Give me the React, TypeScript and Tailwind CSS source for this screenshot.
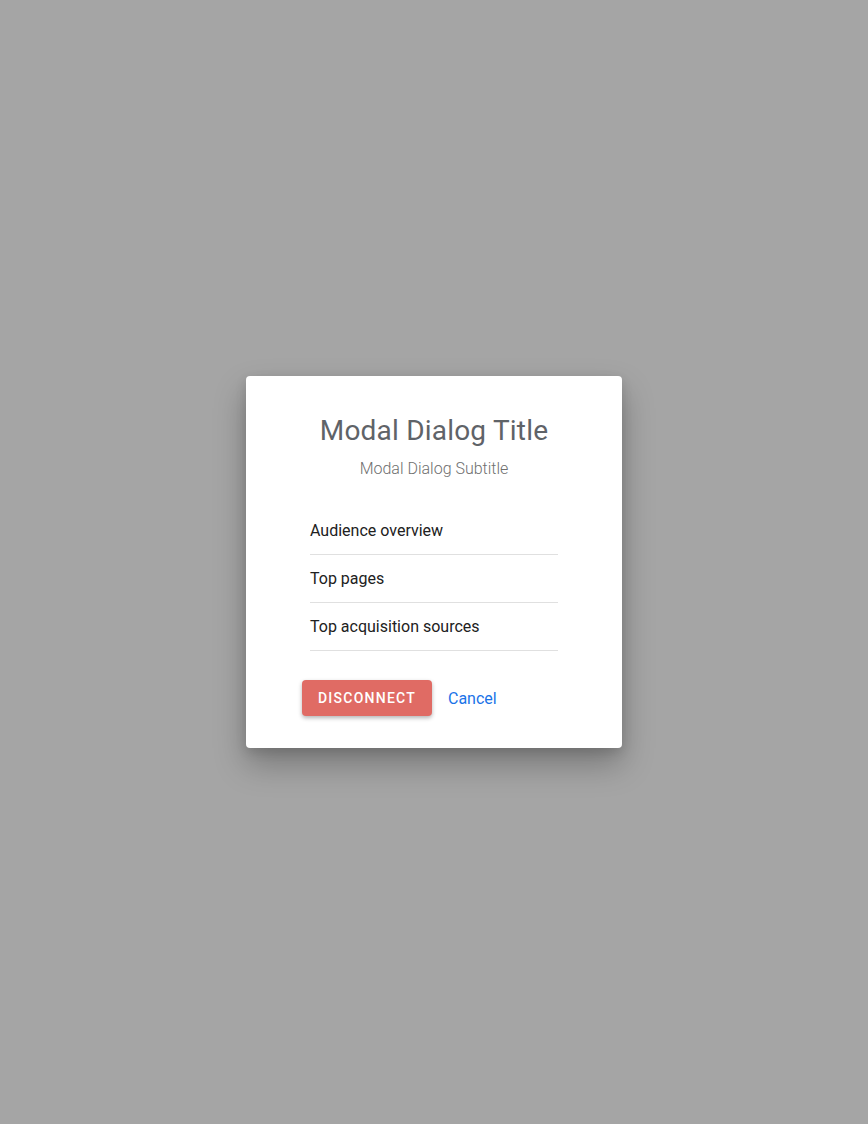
import React from "react";

export default function App() {
  const items = ["Audience overview", "Top pages", "Top acquisition sources"];
  return (
    <div
      className="w-[868px] h-[1124px] bg-[#a5a5a5] flex items-center justify-center"
      style={{ fontFamily: "Roboto, 'Liberation Sans', sans-serif" }}
    >
      <div className="w-[376px] h-[372px] bg-white rounded-[4px] shadow-[0_16px_32px_rgba(0,0,0,0.28),0_4px_12px_rgba(0,0,0,0.12)] flex flex-col pt-[37px] pb-[31px]">
        <div className="text-center text-[28px] leading-[36px] text-[#5f6368] font-normal tracking-[0.2px]">
          Modal Dialog Title
        </div>
        <div className="mt-[8px] text-center text-[16px] leading-[24px] text-[#6f6f6f] font-light">
          Modal Dialog Subtitle
        </div>
        <div className="mt-[26px] mx-[64px] flex flex-col">
          {items.map((t) => (
            <div
              key={t}
              className="h-[48px] flex items-center border-b border-[#e0e0e0] text-[16px] text-[#212121]"
            >
              {t}
            </div>
          ))}
        </div>
        <div className="mt-[29px] ml-[56px] flex items-center gap-[16px]">
          <button className="h-[36px] w-[130px] rounded-[4px] bg-[#e06b64] text-white text-[14px] font-medium tracking-[1.25px] shadow-[0_2px_4px_rgba(0,0,0,0.3)]">
            DISCONNECT
          </button>
          <button className="text-[16px] leading-[24px] text-[#1a73e8] mt-[2px]">Cancel</button>
        </div>
      </div>
    </div>
  );
}
